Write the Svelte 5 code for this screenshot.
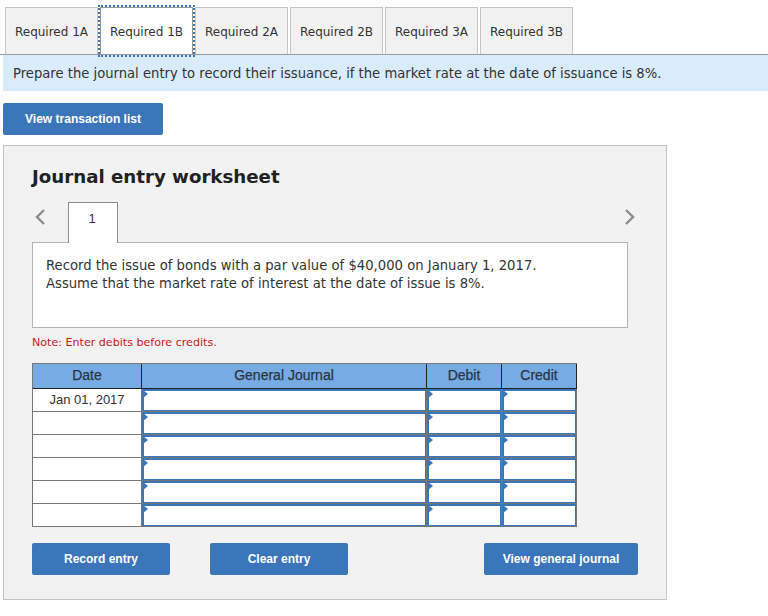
<script>
  const tabs = ['Required 1A', 'Required 1B', 'Required 2A', 'Required 2B', 'Required 3A', 'Required 3B'];
  const dates = ['Jan 01, 2017', '', '', '', '', ''];
</script>

<div class="page">
  <div class="tabs">
    {#each tabs as t, i}
      <div class="tab" class:active={i === 1}>{t}</div>
    {/each}
  </div>
  <div class="banner">Prepare the journal entry to record their issuance, if the market rate at the date of issuance is 8%.</div>
  <button class="btn list">View transaction list</button>

  <section class="panel">
    <h2>Journal entry worksheet</h2>
    <div class="nav">
      <svg class="chev" width="12" height="18" viewBox="0 0 12 18"><path d="M10 2 L3 9 L10 16" /></svg>
      <div class="num">1</div>
      <svg class="chev right" width="12" height="18" viewBox="0 0 12 18"><path d="M2 2 L9 9 L2 16" /></svg>
    </div>
    <div class="desc">Record the issue of bonds with a par value of $40,000 on January 1, 2017.<br />Assume that the market rate of interest at the date of issue is 8%.</div>
    <p class="note">Note: Enter debits before credits.</p>

    <div class="table">
      <div class="th">Date</div>
      <div class="th">General Journal</div>
      <div class="th">Debit</div>
      <div class="th">Credit</div>
      {#each dates as d}
        <div class="date">{d}</div>
        <div class="cell"></div>
        <div class="cell"></div>
        <div class="cell"></div>
      {/each}
    </div>

    <div class="actions">
      <button class="btn record">Record entry</button>
      <button class="btn clear">Clear entry</button>
      <button class="btn view">View general journal</button>
    </div>
  </section>
</div>

<style>
  :global(body) {
    margin: 0;
    background: #fff;
  }
  .page {
    width: 768px;
    height: 616px;
    overflow: hidden;
    font-family: "DejaVu Sans", Verdana, sans-serif;
    color: #333;
    padding-top: 7px;
    box-sizing: border-box;
  }
  .tabs {
    display: flex;
    gap: 2px;
    padding-left: 5px;
    height: 48px;
    box-sizing: border-box;
    border-bottom: 1px solid #999;
  }
  .tab {
    width: 93px;
    height: 47px;
    box-sizing: border-box;
    background: #f2f2f2;
    border: 1px solid #c4c4c4;
    border-bottom: 0;
    font-size: 12px;
    line-height: 48px;
    text-align: center;
    white-space: nowrap;
  }
  .tab.active {
    height: 48px;
    background: #fff;
    border: 1px solid #999;
    line-height: 48px;
    outline: 2px dotted #3a75b8;
    position: relative;
    z-index: 1;
  }
  .banner {
    margin-left: 3px;
    height: 36px;
    background: #d9ecfb;
    font-size: 13.16px;
    line-height: 37px;
    padding-left: 10px;
    white-space: nowrap;
  }
  .btn {
    display: block;
    height: 32px;
    padding: 0;
    border: 0;
    border-radius: 2px;
    background: #3b76ba;
    color: #fff;
    font-family: "Liberation Sans", Arial, sans-serif;
    font-size: 12px;
    font-weight: 700;
    text-align: center;
  }
  .list {
    width: 160px;
    margin: 12px 0 10px 3px;
  }
  .panel {
    width: 664px;
    height: 455px;
    margin-left: 3px;
    box-sizing: border-box;
    background: #f2f2f2;
    border: 1px solid #c4c4c4;
    padding: 0 28px;
  }
  h2 {
    margin: 0;
    padding-top: 19px;
    height: 56px;
    box-sizing: border-box;
    font-size: 18.2px;
    line-height: 24px;
    font-weight: 700;
    color: #222;
  }
  .nav {
    display: flex;
    align-items: flex-start;
    width: 604px;
    height: 41px;
    position: relative;
    z-index: 1;
  }
  .chev {
    margin: 6px 0 0 2px;
    flex: none;
  }
  .chev path {
    fill: none;
    stroke: #8c8c8c;
    stroke-width: 2.4;
  }
  .chev.right {
    margin-left: auto;
  }
  .num {
    width: 50px;
    height: 41px;
    margin-left: 22px;
    padding-right: 2px;
    box-sizing: border-box;
    background: #fff;
    border: 1px solid #8c8c8c;
    border-bottom: 0;
    font-family: "Liberation Sans", Arial, sans-serif;
    font-size: 13px;
    line-height: 32px;
    text-align: center;
  }
  .desc {
    width: 596px;
    height: 86px;
    box-sizing: border-box;
    margin-top: -1px;
    background: #fff;
    border: 1px solid #b5b5b5;
    padding: 14px 13px 0;
    font-size: 13.2px;
    line-height: 18px;
    white-space: nowrap;
  }
  .note {
    margin: 7px 0 12px;
    height: 16px;
    font-size: 11.1px;
    line-height: 16px;
    color: #c8161d;
  }
  .table {
    display: grid;
    grid-template-columns: 109px 285px 75px 75px;
    grid-template-rows: 25px repeat(6, 23px);
    width: 545px;
    height: 164px;
    box-sizing: border-box;
    border-top: 1px solid #777;
    border-left: 1px solid #777;
    font-family: "Liberation Sans", Arial, sans-serif;
  }
  .th {
    background: #76abe4;
    border-right: 1px solid #222;
    border-bottom: 1px solid #222;
    text-align: center;
    line-height: 23px;
    color: #2b3442;
    font-size: 14px;
    -webkit-text-stroke: 0.25px #2b3442;
  }
  .date {
    background: #fff;
    border-right: 1px solid #777;
    border-bottom: 1px solid #777;
    text-align: center;
    line-height: 21px;
    font-size: 13px;
    color: #333;
  }
  .cell {
    position: relative;
    background: #fff;
    border-right: 1px solid #777;
    border-bottom: 1px solid #777;
    box-shadow: inset 2px 2px 0 #3b76ba, inset -1px -1px 0 #3b76ba;
  }
  .cell::before {
    content: "";
    position: absolute;
    left: 1px;
    top: 1px;
    border-left: 5px solid #3b76ba;
    border-top: 4px solid transparent;
    border-bottom: 4px solid transparent;
  }
  .actions {
    display: flex;
    margin-top: 16px;
  }
  .record, .clear {
    width: 138px;
  }
  .clear {
    margin-left: 40px;
  }
  .view {
    width: 154px;
    margin-left: 136px;
  }
</style>
